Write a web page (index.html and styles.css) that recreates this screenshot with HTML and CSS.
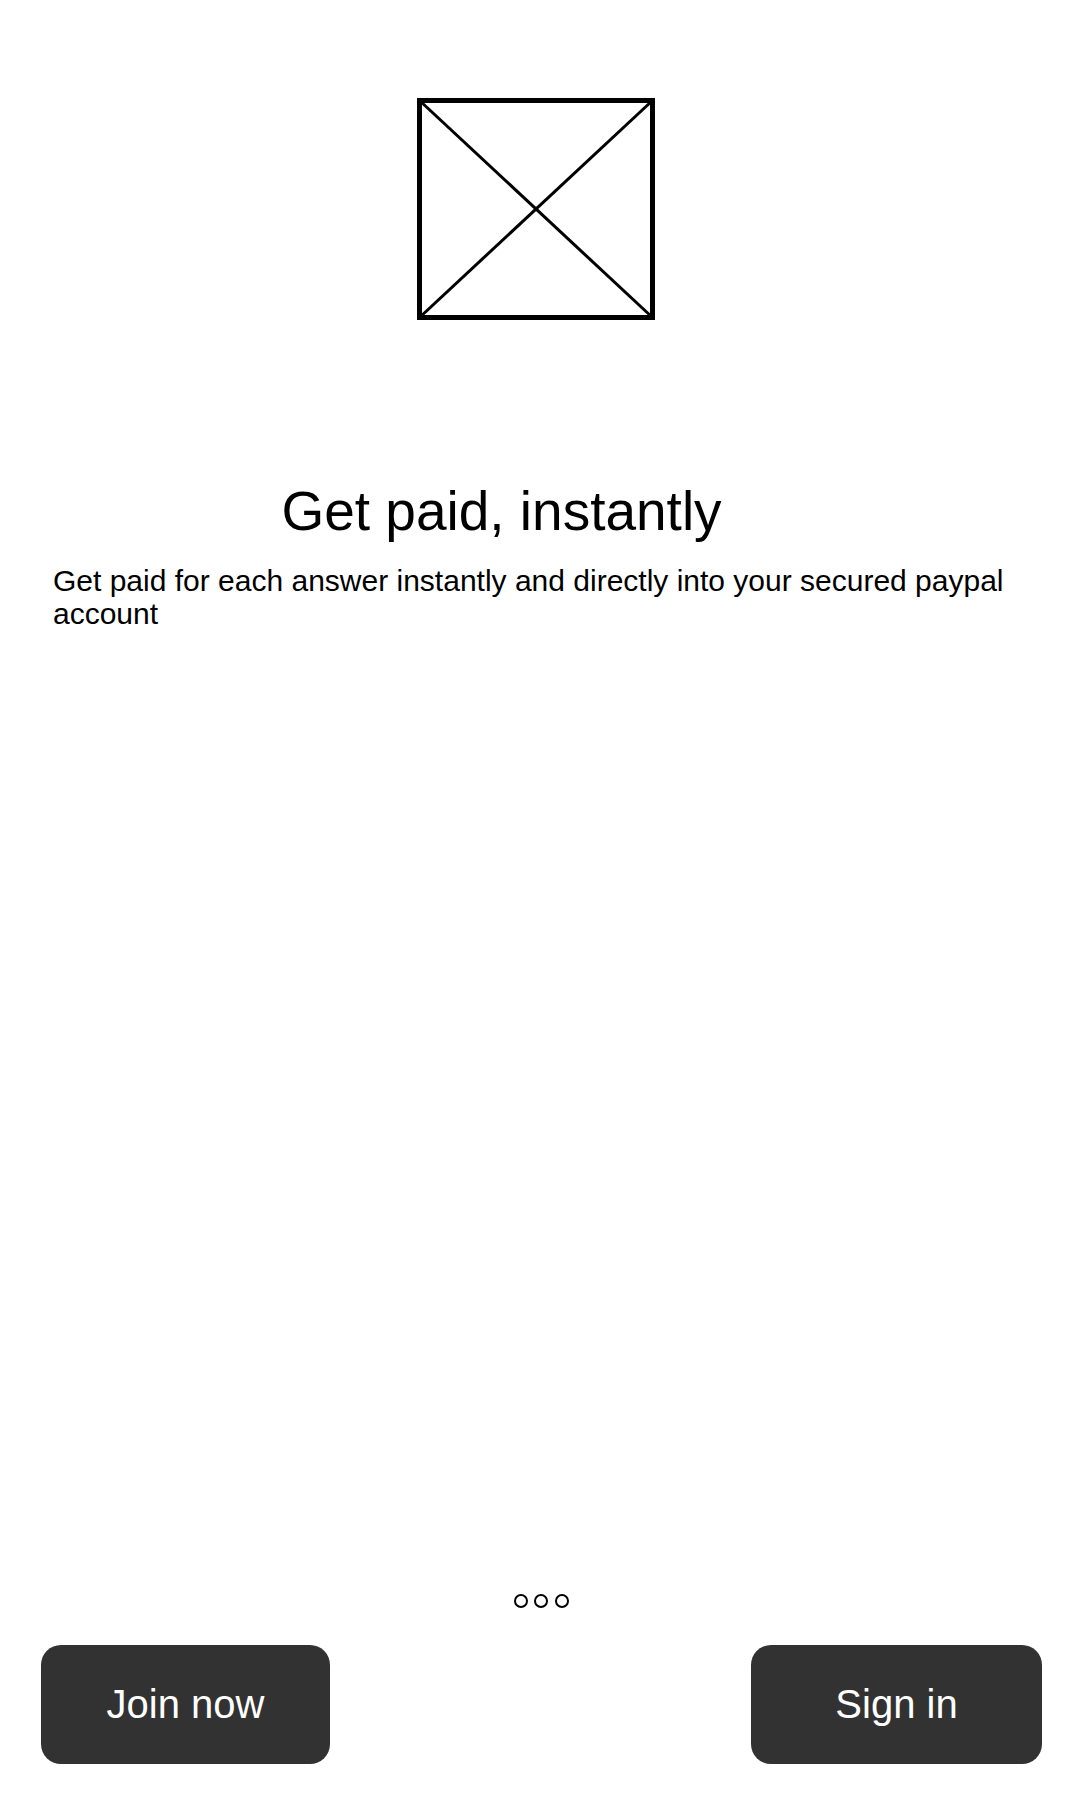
FILE: index.html
```html
<!DOCTYPE html>
<html lang="en">
<head>
<meta charset="utf-8">
<title>Get paid, instantly</title>
<link rel="stylesheet" href="styles.css">
</head>
<body>
<main class="screen">
  <div class="hero">
    <svg class="placeholder" width="238" height="222" viewBox="0 0 238 222" aria-hidden="true">
      <line x1="2" y1="2" x2="236" y2="220" stroke="#000" stroke-width="3"/>
      <line x1="236" y1="2" x2="2" y2="220" stroke="#000" stroke-width="3"/>
      <rect x="2.5" y="2.5" width="233" height="217" fill="none" stroke="#000" stroke-width="5"/>
    </svg>
  </div>
  <section class="copy">
    <h1 class="title">Get paid, instantly</h1>
    <p class="desc">Get paid for each answer instantly and directly into your secured paypal account</p>
  </section>
  <div class="spacer"></div>
  <div class="dots">
    <span class="dot"></span><span class="dot"></span><span class="dot"></span>
  </div>
  <div class="actions">
    <button class="btn">Join now</button>
    <button class="btn btn-signin">Sign in</button>
  </div>
</main>
</body>
</html>
```

FILE: styles.css
```css
html, body {
  margin: 0;
  padding: 0;
  background: #fff;
}
body {
  font-family: "Liberation Sans", Arial, sans-serif;
  color: #000;
}
.screen {
  height: 1800px;
  display: flex;
  flex-direction: column;
}
.hero {
  padding-top: 98px;
  padding-left: 417px;
}
.placeholder {
  display: block;
}
.copy {
  padding: 0 130px 0 53px;
}
.title {
  margin: 159px 0 0;
  font-size: 55px;
  line-height: 64px;
  font-weight: 400;
  text-align: center;
}
.desc {
  margin: 21px -80px 0 0;
  font-size: 30px;
  line-height: 33px;
}
.spacer {
  flex: 1;
}
.dots {
  display: flex;
  justify-content: center;
  gap: 6.5px;
  padding-left: 2px;
}
.dot {
  width: 10px;
  height: 10px;
  border: 2.5px solid #000;
  border-radius: 50%;
}
.actions {
  margin-top: 37px;
  padding: 0 38px 36px 41px;
  display: flex;
  justify-content: space-between;
}
.btn {
  width: 289px;
  height: 119px;
  border: none;
  border-radius: 20px;
  background: #323232;
  color: #fff;
  font-family: "Liberation Sans", Arial, sans-serif;
  font-size: 40px;
  padding: 0;
}
.btn-signin {
  width: 291px;
}
```
